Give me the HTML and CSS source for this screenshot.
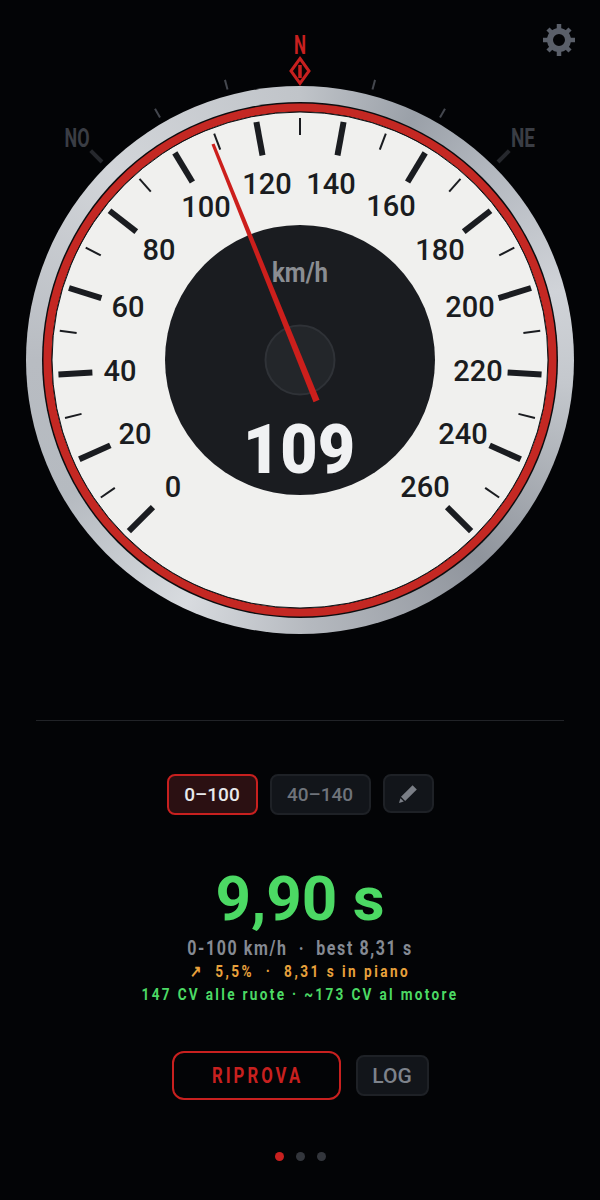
FILE: index.html
```html
<!DOCTYPE html>
<html lang="it">
<head>
    <meta charset="UTF-8">
    <meta name="viewport" content="width=device-width, initial-scale=1.0">
    <title>Tachimetro</title>
    <link rel="stylesheet" href="styles.css">
</head>
<body>
    <div class="gauge-box">
        <button class="settings" aria-label="Impostazioni">
            <svg width="34" height="34" viewBox="0 0 34 34">
                <circle class="gear-ring" cx="17" cy="17" r="9"/>
                <g class="gear-teeth">
                    <line x1="17" y1="1" x2="17" y2="7"/>
                    <line x1="17" y1="27" x2="17" y2="33"/>
                    <line x1="1" y1="17" x2="7" y2="17"/>
                    <line x1="27" y1="17" x2="33" y2="17"/>
                    <line x1="6" y1="6" x2="10" y2="10"/>
                    <line x1="24" y1="24" x2="28" y2="28"/>
                    <line x1="28" y1="6" x2="24" y2="10"/>
                    <line x1="10" y1="24" x2="6" y2="28"/>
                </g>
            </svg>
        </button>

        <div class="bezel"></div>

        <svg class="gauge" width="600" height="660" viewBox="0 0 600 660">
            <!-- bussola -->
            <text class="compass-n" x="300" y="54" textLength="12" lengthAdjust="spacingAndGlyphs">N</text>
            <path class="compass-mark" d="M300 58.5 L309 71 L300 83.5 L291 71 Z"/>
            <path class="compass-pin" d="M300 65 V78"/>
            <text class="compass-label" x="77" y="147" textLength="25" lengthAdjust="spacingAndGlyphs">NO</text>
            <text class="compass-label" x="523" y="147" textLength="24" lengthAdjust="spacingAndGlyphs">NE</text>
            <g class="compass-ticks">
                <line x1="300" y1="70" x2="300" y2="80" transform="rotate(-15 300 360)"/>
                <line x1="300" y1="70" x2="300" y2="80" transform="rotate(-30 300 360)"/>
                <line x1="300" y1="70" x2="300" y2="80" transform="rotate(15 300 360)"/>
                <line x1="300" y1="70" x2="300" y2="80" transform="rotate(30 300 360)"/>
                <line class="compass-tick-big" x1="300" y1="64" x2="300" y2="80" transform="rotate(-45 300 360)"/>
                <line class="compass-tick-big" x1="300" y1="64" x2="300" y2="80" transform="rotate(45 300 360)"/>
            </g>

            <!-- quadrante -->
            <circle class="ring-line" cx="300" cy="360" r="258"/>
            <circle class="ring-red" cx="300" cy="360" r="252.5"/>
            <circle class="face" cx="300" cy="360" r="248"/>

            <g class="ticks-major">
                <line x1="300" y1="118" x2="300" y2="152" transform="rotate(-135 300 360)"/>
                <line x1="300" y1="118" x2="300" y2="152" transform="rotate(-114.23 300 360)"/>
                <line x1="300" y1="118" x2="300" y2="152" transform="rotate(-93.46 300 360)"/>
                <line x1="300" y1="118" x2="300" y2="152" transform="rotate(-72.69 300 360)"/>
                <line x1="300" y1="118" x2="300" y2="152" transform="rotate(-51.92 300 360)"/>
                <line x1="300" y1="118" x2="300" y2="152" transform="rotate(-31.15 300 360)"/>
                <line x1="300" y1="118" x2="300" y2="152" transform="rotate(-10.38 300 360)"/>
                <line x1="300" y1="118" x2="300" y2="152" transform="rotate(10.38 300 360)"/>
                <line x1="300" y1="118" x2="300" y2="152" transform="rotate(31.15 300 360)"/>
                <line x1="300" y1="118" x2="300" y2="152" transform="rotate(51.92 300 360)"/>
                <line x1="300" y1="118" x2="300" y2="152" transform="rotate(72.69 300 360)"/>
                <line x1="300" y1="118" x2="300" y2="152" transform="rotate(93.46 300 360)"/>
                <line x1="300" y1="118" x2="300" y2="152" transform="rotate(114.23 300 360)"/>
                <line x1="300" y1="118" x2="300" y2="152" transform="rotate(135 300 360)"/>
            </g>
            <g class="ticks-minor">
                <line x1="300" y1="118" x2="300" y2="135" transform="rotate(-124.62 300 360)"/>
                <line x1="300" y1="118" x2="300" y2="135" transform="rotate(-103.85 300 360)"/>
                <line x1="300" y1="118" x2="300" y2="135" transform="rotate(-83.08 300 360)"/>
                <line x1="300" y1="118" x2="300" y2="135" transform="rotate(-62.31 300 360)"/>
                <line x1="300" y1="118" x2="300" y2="135" transform="rotate(-41.54 300 360)"/>
                <line x1="300" y1="118" x2="300" y2="135" transform="rotate(-20.77 300 360)"/>
                <line x1="300" y1="118" x2="300" y2="135"/>
                <line x1="300" y1="118" x2="300" y2="135" transform="rotate(20.77 300 360)"/>
                <line x1="300" y1="118" x2="300" y2="135" transform="rotate(41.54 300 360)"/>
                <line x1="300" y1="118" x2="300" y2="135" transform="rotate(62.31 300 360)"/>
                <line x1="300" y1="118" x2="300" y2="135" transform="rotate(83.08 300 360)"/>
                <line x1="300" y1="118" x2="300" y2="135" transform="rotate(103.85 300 360)"/>
                <line x1="300" y1="118" x2="300" y2="135" transform="rotate(124.62 300 360)"/>
            </g>

            <g class="speed-labels">
                <text x="173" y="497">0</text>
                <text x="135" y="444">20</text>
                <text x="120" y="381">40</text>
                <text x="128" y="317">60</text>
                <text x="159" y="260">80</text>
                <text x="206" y="217">100</text>
                <text x="267" y="194">120</text>
                <text x="331" y="194">140</text>
                <text x="391" y="216">160</text>
                <text x="440" y="260">180</text>
                <text x="470" y="317">200</text>
                <text x="478" y="381">220</text>
                <text x="463" y="444">240</text>
                <text x="425" y="497">260</text>
            </g>

            <circle class="hub" cx="300" cy="360" r="135"/>
            <text class="unit" x="300" y="282" textLength="56" lengthAdjust="spacingAndGlyphs">km/h</text>
            <circle class="cap" cx="300" cy="360" r="34.5"/>
            <text class="speed" x="299" y="473" textLength="112" lengthAdjust="spacingAndGlyphs">109</text>
            <polygon class="needle" points="211.5,144.6 214.5,143.4 319.5,399.8 313.5,402.2"/>
        </svg>
    </div>

    <hr class="divider">

    <div class="modes">
        <button class="mode mode-active">0–100</button>
        <button class="mode mode-wide">40–140</button>
        <button class="mode mode-edit" aria-label="Modifica">
            <svg width="20" height="20" viewBox="0 0 20 20">
                <path d="M14.6 1.2 L18.8 5.4 L7.2 17 L3 12.8 Z"/>
                <path d="M2.4 14.2 L5.8 17.6 L1 19 Z"/>
            </svg>
        </button>
    </div>

    <div class="result">
        <div class="time">9,90 s</div>
        <div class="line line-grey">0-100 km/h &nbsp;·&nbsp; best 8,31 s</div>
        <div class="line line-orange">↗ &nbsp;5,5% &nbsp;·&nbsp; 8,31 s in piano</div>
        <div class="line line-green">147 CV alle ruote · ~173 CV al motore</div>
    </div>

    <div class="actions">
        <button class="retry"><span class="retry-text">RIPROVA</span></button>
        <button class="log">LOG</button>
    </div>

    <div class="dots">
        <span class="dot dot-on"></span>
        <span class="dot"></span>
        <span class="dot"></span>
    </div>
</body>
</html>
```

FILE: styles.css
```css
* {
    box-sizing: border-box;
}

body {
    margin: 0;
    width: 600px;
    height: 1200px;
    overflow: hidden;
    background-color: #030406;
    color: #e8e9eb;
    font-family: 'Roboto', sans-serif;
}

button {
    font-family: inherit;
    cursor: pointer;
}

.gauge-box {
    position: relative;
    height: 660px;
}

.gauge {
    position: absolute;
    left: 0;
    top: 0;
    display: block;
}

.bezel {
    position: absolute;
    left: 26px;
    top: 86px;
    width: 548px;
    height: 548px;
    border-radius: 50%;
    background: conic-gradient(from 0deg, #c0c4c9 0deg, #9aa0a8 25deg, #b3b8bf 45deg, #d0d3d8 75deg, #c4c8cd 95deg, #8f949c 138deg, #b5b9bf 178deg, #d8dbdf 205deg, #b5bac0 240deg, #b8bcc2 270deg, #d2d5d9 315deg, #c0c4c9 360deg);
}

.settings {
    position: absolute;
    z-index: 2;
    right: 24px;
    top: 23px;
    width: 34px;
    height: 34px;
    padding: 0;
    border: none;
    background: none;
}

.gear-ring {
    fill: none;
    stroke: #5a5f69;
    stroke-width: 6;
}

.gear-teeth line {
    stroke: #5a5f69;
    stroke-width: 4.5;
}

.compass-n {
    fill: #c8201f;
    font-size: 25px;
    font-weight: 700;
    text-anchor: middle;
}

.compass-mark {
    fill: #0a0405;
    stroke: #c8201f;
    stroke-width: 3;
}

.compass-pin {
    stroke: #c8201f;
    stroke-width: 3.5;
}

.compass-label {
    fill: #3a3d44;
    font-size: 25px;
    font-weight: 700;
    text-anchor: middle;
}

.compass-ticks line {
    stroke: #44474e;
    stroke-width: 2;
}

.compass-ticks .compass-tick-big {
    stroke: #26282d;
    stroke-width: 4;
}

.ring-line {
    fill: #0c0d0f;
}

.ring-red {
    fill: none;
    stroke: #c42823;
    stroke-width: 8;
}

.face {
    fill: #f0f0ee;
    stroke: #101114;
    stroke-width: 1;
}

.ticks-major line {
    stroke: #1a1c20;
    stroke-width: 6;
}

.ticks-minor line {
    stroke: #1a1c20;
    stroke-width: 2;
}

.speed-labels text {
    fill: #1a1c20;
    font-size: 29px;
    font-weight: 500;
    text-anchor: middle;
}

.hub {
    fill: #1a1c20;
}

.cap {
    fill: #23262a;
    stroke: #2f3237;
    stroke-width: 2;
}

.unit {
    fill: #8a8d92;
    font-size: 28px;
    font-weight: 700;
    text-anchor: middle;
}

.speed {
    fill: #f0f1f3;
    font-size: 69px;
    font-weight: 900;
    text-anchor: middle;
}

.needle {
    fill: #cc1f1c;
}

.divider {
    width: 528px;
    height: 1px;
    margin: 60px 36px 0;
    border: none;
    background-color: #212327;
}

.modes {
    display: flex;
    justify-content: center;
    align-items: flex-start;
    gap: 12px;
    margin-top: 53px;
}

.mode {
    width: 91px;
    height: 41px;
    padding: 0;
    border: 2px solid #1e2126;
    border-radius: 8px;
    background-color: #12151a;
    color: #6f737b;
    font-size: 19px;
    font-weight: 500;
}

.mode-active {
    border-color: #c8201f;
    background-color: #2b1012;
    color: #e8e9eb;
}

.mode-wide {
    width: 101px;
}

.mode-edit {
    display: flex;
    align-items: center;
    justify-content: center;
    width: 51px;
    height: 39px;
}

.mode-edit svg {
    fill: #7a7e86;
}

.result {
    margin-top: 50px;
    text-align: center;
}

.time {
    color: #4cd964;
    font-size: 62px;
    font-weight: 700;
    line-height: 68px;
}

/* Roboto stretta: non c'e' una variante condensed installata */
.line {
    font-weight: 700;
    white-space: nowrap;
    transform: scaleX(0.8);
}

.line-grey {
    margin-top: 3px;
    color: #858a93;
    font-size: 20px;
    line-height: 24px;
    letter-spacing: 2px;
}

.line-orange {
    color: #e8a13c;
    font-size: 17px;
    line-height: 23px;
    letter-spacing: 3.1px;
}

.line-green {
    color: #4cd964;
    font-size: 17px;
    line-height: 23px;
    letter-spacing: 2.9px;
}

.actions {
    display: flex;
    justify-content: center;
    align-items: center;
    gap: 15px;
    margin-top: 45px;
}

.retry {
    width: 169px;
    height: 49px;
    padding: 0;
    border: 2px solid #c8201f;
    border-radius: 12px;
    background: none;
    color: #c8201f;
    font-size: 22px;
    font-weight: 700;
}

.retry-text {
    display: inline-block;
    padding-left: 4px;
    letter-spacing: 4px;
    transform: scaleX(0.76);
}

.log {
    width: 73px;
    height: 41px;
    padding: 0;
    border: 2px solid #1e2126;
    border-radius: 8px;
    background-color: #12151a;
    color: #7d828b;
    font-size: 21px;
    font-weight: 500;
}

.dots {
    display: flex;
    justify-content: center;
    gap: 12px;
    margin-top: 52px;
}

.dot {
    width: 9px;
    height: 9px;
    border-radius: 50%;
    background-color: #33363c;
}

.dot-on {
    background-color: #c8201f;
}
```
